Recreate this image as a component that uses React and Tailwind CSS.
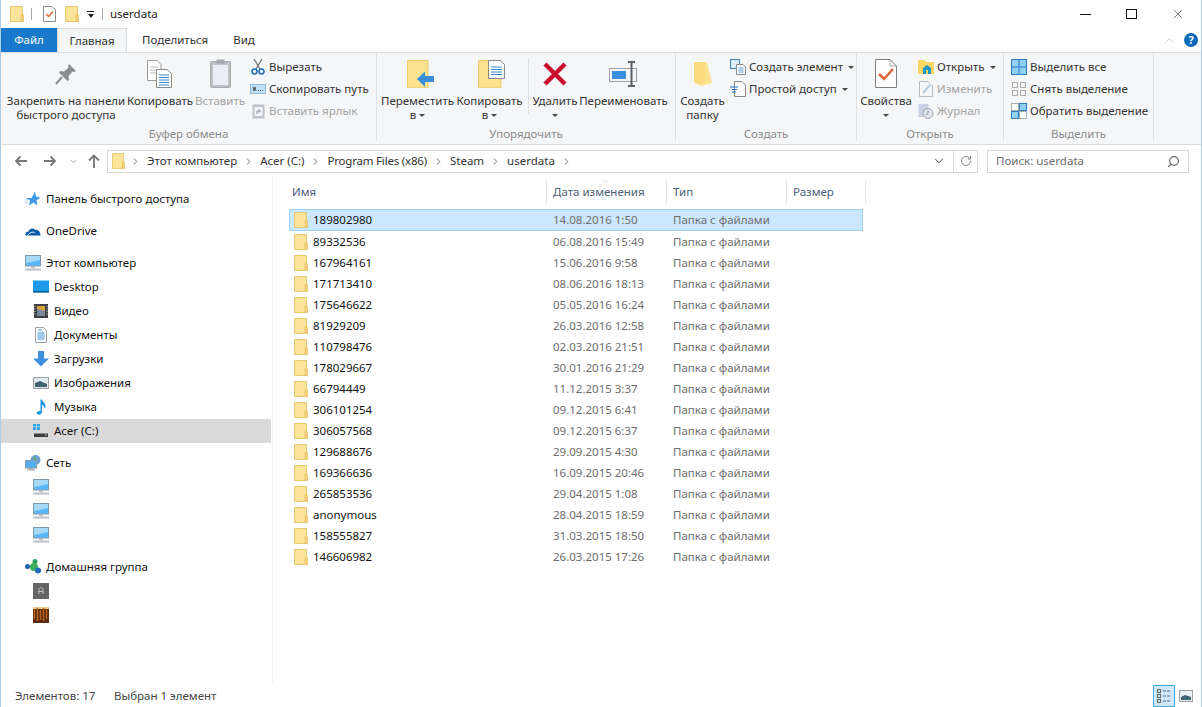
import { ChevronDown, ChevronRight, ChevronUp, RotateCw, Search, X } from 'lucide-react'

const FOLDERS = [
  ['189802980', '14.08.2016 1:50'],
  ['89332536', '06.08.2016 15:49'],
  ['167964161', '15.06.2016 9:58'],
  ['171713410', '08.06.2016 18:13'],
  ['175646622', '05.05.2016 16:24'],
  ['81929209', '26.03.2016 12:58'],
  ['110798476', '02.03.2016 21:51'],
  ['178029667', '30.01.2016 21:29'],
  ['66794449', '11.12.2015 3:37'],
  ['306101254', '09.12.2015 6:41'],
  ['306057568', '09.12.2015 6:37'],
  ['129688676', '29.09.2015 4:30'],
  ['169366636', '16.09.2015 20:46'],
  ['265853536', '29.04.2015 1:08'],
  ['anonymous', '28.04.2015 18:59'],
  ['158555827', '31.03.2015 18:50'],
  ['146606982', '26.03.2015 17:26'],
]

const Folder = ({ w = 14, h = 16 }) => (
  <svg width={w} height={h} viewBox="0 0 14 16" preserveAspectRatio="none" className="shrink-0">
    <path d="M0.5 0.5H12.5V15.5H0.5Z" fill="#fde49b" stroke="#e8c872" />
    <path d="M11 9V15.5H13.5V9L12 8Z" fill="#f5d27a" stroke="#e3bd5f" strokeWidth="0.7" />
  </svg>
)

const Caret = () => <span className="inline-block w-0 h-0 border-x-[3px] border-x-transparent border-t-[3px] border-t-[#444] align-middle" />

const Monitor = () => (
  <svg width="16" height="16" viewBox="0 0 16 16" className="shrink-0">
    <rect x="0.5" y="0.5" width="15" height="10.5" fill="#5cb8f7" stroke="#7f98ab" />
    <path d="M1 1H15V5L1 8Z" fill="#a5daf9" />
    <rect x="6" y="11" width="4" height="2" fill="#b5bcc2" />
    <rect x="0" y="13.5" width="16" height="2" fill="#b8bec4" />
  </svg>
)

const NavIcon = ({ name }) => {
  if (name === 'star')
    return (
      <svg width="16" height="16" viewBox="0 0 16 16">
        <path d="M10 0.5L11 5.5L15.5 6.5L11.5 9.5L12.5 14.5L8.5 11.5L4 14.5L5 9.5L1 7H6.5Z" fill="#3f9be8" />
        <path d="M0 9H3M0 11.5H2.5" stroke="#a9cdec" />
      </svg>
    )
  if (name === 'cloud')
    return (
      <svg width="16" height="16" viewBox="0 0 16 16">
        <path d="M0.5 12.5C0 10 1.5 8.5 3.5 8.5C4.5 5.5 8 4.5 10 7C12.5 6 15.5 8.5 15.5 12.5Z" fill="#0d5ca8" />
        <path d="M3 12.5C4 10 7 8.5 9.5 9.5" stroke="#fff" fill="none" />
      </svg>
    )
  if (name === 'monitor') return <Monitor />
  if (name === 'desktop')
    return (
      <svg width="16" height="16" viewBox="0 0 16 16">
        <rect x="0" y="1.5" width="16" height="12" fill="#1e9be8" />
        <rect x="0" y="12" width="16" height="1.5" fill="#0f5f96" />
      </svg>
    )
  if (name === 'video')
    return (
      <svg width="16" height="16" viewBox="0 0 16 16">
        <rect x="1" y="1" width="14" height="14" fill="#3c3f44" />
        <rect x="4" y="3" width="8" height="10" fill="#7d86a0" />
        <path d="M4 3H12V8L4 6Z" fill="#d6a33c" />
        <path d="M2 3V13M14 3V13" stroke="#c8c8c8" strokeDasharray="1 1.5" />
      </svg>
    )
  if (name === 'docs')
    return (
      <svg width="16" height="16" viewBox="0 0 16 16">
        <path d="M2.5 0.5H10.5L13.5 3.5V15.5H2.5Z" fill="#fff" stroke="#9aa0a6" />
        <path d="M5 3H9M4.5 6H11.5M4.5 8H11.5M4.5 10H11.5M4.5 12H11.5" stroke="#3b8fd6" />
      </svg>
    )
  if (name === 'down')
    return (
      <svg width="16" height="16" viewBox="0 0 16 16">
        <path d="M5 0H11V7.5H16L8 15.5L0 7.5H5Z" fill="#3d8fdc" />
      </svg>
    )
  if (name === 'image')
    return (
      <svg width="16" height="16" viewBox="0 0 16 16">
        <rect x="0.5" y="2.5" width="15" height="11" fill="#dfe9ee" stroke="#9aa0a6" />
        <path d="M2 8L7 6L14 9V12H2Z" fill="#3f6473" />
      </svg>
    )
  if (name === 'music')
    return (
      <svg width="16" height="16" viewBox="0 0 16 16">
        <path d="M7.5 0.5H9C9.5 3 12.5 4 12.5 7C12.5 8 12 9 11.5 9.5C11.5 7.5 10.5 6.5 9 6V13C9 15 7 16 5.5 15.5C3.5 15 3 13.5 4.5 12.5C5.5 11.8 6.8 11.8 7.5 12.3Z" fill="#1e96ea" />
      </svg>
    )
  if (name === 'drive')
    return (
      <svg width="16" height="16" viewBox="0 0 16 16">
        <path d="M0 1H3V3.5H0ZM3.8 1H7V3.5H3.8ZM0 4.3H3V7H0ZM3.8 4.3H7V7H3.8Z" fill="#2aa3e8" />
        <rect x="1" y="10.5" width="14" height="3.5" fill="#3c3c3c" />
        <rect x="12" y="11.5" width="1.5" height="1" fill="#e6e6e6" />
      </svg>
    )
  if (name === 'net')
    return (
      <svg width="16" height="16" viewBox="0 0 16 16">
        <circle cx="10.5" cy="5" r="5" fill="#6f9fd0" />
        <path d="M8 2L11 3.5L9.5 6Z" fill="#6cae57" />
        <rect x="0.5" y="5.5" width="11" height="7.5" fill="#4fb0f0" stroke="#8a9aa8" />
        <rect x="4" y="13" width="4" height="1.2" fill="#9aa5ae" />
        <rect x="2" y="14.3" width="8" height="1.2" fill="#9aa5ae" />
      </svg>
    )
  if (name === 'home')
    return (
      <svg width="16" height="16" viewBox="0 0 16 16">
        <circle cx="2.5" cy="7.5" r="2.5" fill="#1e5da8" />
        <circle cx="10" cy="2.5" r="2.5" fill="#2f9e57" />
        <circle cx="9" cy="8" r="4" fill="#3bae5c" />
        <circle cx="13" cy="11.5" r="3" fill="#1e6fb8" />
      </svg>
    )
  if (name === 'avatar')
    return (
      <svg width="16" height="16" viewBox="0 0 16 16">
        <rect width="16" height="16" fill="#666" />
        <path d="M6 11V6.5C6 4 10 4 10 6.5V11M6 8.5H10" fill="none" stroke="#c4c4c4" />
      </svg>
    )
  return (
    <svg width="16" height="16" viewBox="0 0 16 16">
      <rect width="16" height="16" fill="#5a2c0e" />
      <rect width="16" height="2" fill="#e8c88a" />
      <path d="M1.5 2V12M4.5 1V14M7.5 3V13M10.5 1V14M13.5 2V12" stroke="#b8661a" strokeWidth="1.4" />
    </svg>
  )
}

const SideItem = ({ icon, label, child, active }) => (
  <div className={`h-6 flex items-center gap-[5px] ${child ? 'pl-[32px]' : 'pl-[24px]'} ${active ? 'bg-[#d9d9d9]' : ''}`}>
    <NavIcon name={icon} />
    {label && <span className="text-[#111] whitespace-nowrap">{label}</span>}
  </div>
)

const LargeBtn = ({ w, label, sub, disabled, caret, children }) => (
  <div className={`flex flex-col items-center shrink-0 ${w} ${disabled ? 'text-[#a3a3a3]' : 'text-[#333]'}`}>
    <div className="h-[41px] flex items-center justify-center">{children}</div>
    <div className="text-center leading-[14px] whitespace-pre">{label}</div>
    {sub && <div className="leading-[14px] flex items-center gap-[3px]">{sub}<Caret /></div>}
    {caret && <div className="h-[14px] flex items-center"><Caret /></div>}
  </div>
)

const SmallBtn = ({ icon, label, disabled, caret }) => (
  <div className={`h-[22px] flex items-center gap-[3px] whitespace-nowrap ${disabled ? 'text-[#a3a3a3]' : 'text-[#333]'}`}>
    <span className="w-4 h-4 flex items-center justify-center shrink-0">{icon}</span>
    <span>{label}</span>
    {caret && <span className="ml-[2px] flex"><Caret /></span>}
  </div>
)

const Group = ({ w, label, children }) => (
  <div className={`${w} shrink-0 flex flex-col h-[88px] border-r border-[#dfe0e2]`}>
    <div className="flex h-[75px]">{children}</div>
    <div className="text-center text-[#8c8c8c] leading-[14px]">{label}</div>
  </div>
)

const Crumb = ({ children }) => (
  <>
    <ChevronRight size={11} strokeWidth={2} className="text-[#666] shrink-0" />
    {children && <span className="text-[#333] whitespace-nowrap">{children}</span>}
  </>
)

const HeaderCell = ({ w, label }) => (
  <div className={`${w} h-6 shrink-0 border-r border-[#e5e5e5] pl-[6px] flex items-center text-[#4c607a] whitespace-nowrap`}>{label}</div>
)

export default function App() {
  return (
    <div className="w-[1202px] h-[707px] overflow-hidden bg-white border-x border-[#a9cce9] flex flex-col text-[11.5px] font-['Noto_Sans',sans-serif]">
      {/* title bar */}
      <div className="h-7 flex items-center shrink-0">
        <div className="ml-[9px]"><Folder /></div>
        <div className="w-px h-3 bg-[#aaa] ml-[7px]" />
        <svg width="13" height="16" viewBox="0 0 13 16" className="ml-[11px]">
          <path d="M0.5 0.5H9L12.5 4V15.5H0.5Z" fill="#fff" stroke="#8a8a8a" />
          <path d="M3 8L5.5 10.5L10 5.5" fill="none" stroke="#e2673a" strokeWidth="1.5" />
        </svg>
        <div className="ml-[9px]"><Folder /></div>
        <div className="ml-[8px] flex flex-col items-center gap-[2px]">
          <div className="w-[7px] h-px bg-[#222]" />
          <div className="w-0 h-0 border-x-[3.5px] border-x-transparent border-t-[4px] border-t-[#222]" />
        </div>
        <div className="w-px h-3 bg-[#aaa] ml-[8px]" />
        <span className="ml-[7px] text-[#222]">userdata</span>
        <div className="ml-auto flex items-center">
          <div className="w-[11px] h-px bg-[#111] mr-[35px]" />
          <div className="w-[11px] h-[10px] border border-[#111] mr-[34px]" />
          <X size={14} strokeWidth={1} className="text-[#111] mr-[16px]" />
        </div>
      </div>

      {/* tabs */}
      <div className="h-[24px] flex items-stretch shrink-0 relative">
        <div className="w-[56px] bg-[#1979ca] text-white flex items-center justify-center">Файл</div>
        <div className="w-[70px] h-[24px] bg-[#f5f6f7] border-x border-t border-[#dadbdc] text-[#333] flex items-center justify-center relative z-10">Главная</div>
        <div className="ml-[15px] flex items-center text-[#333]">Поделиться</div>
        <div className="ml-[25px] flex items-center text-[#333]">Вид</div>
        <div className="ml-auto flex items-center mr-[3px] gap-[7px]">
          <ChevronUp size={15} strokeWidth={1} className="text-[#aaa]" />
          <div className="w-[14px] h-[14px] rounded-full bg-[#0e69b8] text-white text-[11px] font-bold flex items-center justify-center">?</div>
        </div>
      </div>

      {/* ribbon */}
      <div className="h-[93px] shrink-0 bg-[#f5f6f7] border-y border-[#dadbdc] flex">
        <Group w="w-[376px]" label="Буфер обмена">
          <div className="flex pl-[2px]">
            <LargeBtn w="w-[126px]" label={'Закрепить на панели\nбыстрого доступа'}>
              <svg width="22" height="22" viewBox="0 0 22 22">
                <path d="M14 1L21 8L19 9L17.5 8.5L13.5 13L14 17L12.5 18L4 9.5L5 8L9 8.5L13.5 4.5L13 3Z" fill="#8b8d90" />
                <path d="M7 14L1 21" stroke="#8b8d90" strokeWidth="2" />
              </svg>
            </LargeBtn>
            <LargeBtn w="w-[62px]" label="Копировать">
              <svg width="26" height="28" viewBox="0 0 26 28">
                <path d="M0.5 0.5H10L14 4.5V20.5H0.5Z" fill="#fff" stroke="#9a9a9a" />
                <path d="M3 7H11M3 10H11M3 13H11" stroke="#bbb" />
                <path d="M9.5 9.5H20L24.5 13.5V27.5H9.5Z" fill="#fff" stroke="#8a8a8a" />
                <path d="M12 15H22M12 17.5H22M12 20H22M12 22.5H22M12 25H22" stroke="#3a87cc" />
              </svg>
            </LargeBtn>
            <LargeBtn w="w-[58px]" label="Вставить" disabled>
              <svg width="21" height="29" viewBox="0 0 21 29">
                <rect x="0.5" y="2.5" width="20" height="26" rx="1" fill="#bcc1c7" stroke="#a6abb0" />
                <rect x="3" y="6" width="15" height="20" fill="#e9edf6" />
                <rect x="6.5" y="0.5" width="8" height="4" fill="#a4a8ad" />
              </svg>
            </LargeBtn>
          </div>
          <div className="flex flex-col pt-[3px] ml-[1px]">
            <SmallBtn label="Вырезать" icon={
              <svg width="14" height="16" viewBox="0 0 14 16">
                <path d="M3 0L9 10M11 0L5 10" stroke="#777" strokeWidth="1.3" />
                <circle cx="3.5" cy="12.5" r="2.5" fill="none" stroke="#1f6fc0" strokeWidth="1.5" />
                <circle cx="10.5" cy="12.5" r="2.5" fill="none" stroke="#1f6fc0" strokeWidth="1.5" />
              </svg>
            } />
            <SmallBtn label="Скопировать путь" icon={
              <svg width="16" height="10" viewBox="0 0 16 10">
                <rect x="0.5" y="0.5" width="15" height="9" fill="#bfe1f7" stroke="#8fb9d8" />
                <path d="M3 3L4 7L5 3L6 7M8 6.5H9M10 6.5H11M12 6.5H13" stroke="#333" strokeWidth="0.8" fill="none" />
              </svg>
            } />
            <SmallBtn label="Вставить ярлык" disabled icon={
              <svg width="13" height="16" viewBox="0 0 13 16">
                <rect x="0.5" y="1.5" width="12" height="14" fill="#bcc1c7" />
                <rect x="2.5" y="4" width="8" height="9" fill="#f2f3f6" />
                <path d="M5 11V8H8M6.5 6.5L8.5 8L6.5 9.5" stroke="#8592a3" fill="none" />
              </svg>
            } />
          </div>
        </Group>

        <Group w="w-[299px]" label="Упорядочить">
          <div className="flex pl-[4px]">
            <LargeBtn w="w-[73px]" label="Переместить" sub="в">
              <svg width="27" height="28" viewBox="0 0 27 28" className="ml-[5px]">
                <path d="M0.5 0.5H21V28H0.5Z" fill="#fce28f" stroke="#ecc96d" />
                <path d="M10 19L18 11.5V16H27V22H18V27Z" fill="#3a8fdc" />
              </svg>
            </LargeBtn>
            <LargeBtn w="w-[71px]" label="Копировать" sub="в">
              <svg width="27" height="28" viewBox="0 0 27 28" className="ml-[3px]">
                <path d="M0.5 0.5H23V28H0.5Z" fill="#fce28f" stroke="#ecc96d" />
                <path d="M10.5 0.5H22L26.5 4.5V18.5H10.5Z" fill="#fff" stroke="#8a8a8a" />
                <path d="M13 7H24M13 9.5H24M13 12H24M13 14.5H24" stroke="#3a87cc" />
              </svg>
            </LargeBtn>
            <div className="w-px h-[56px] bg-[#dfe0e2] mt-[5px] ml-[3px] shrink-0" />
            <LargeBtn w="w-[52px]" label="Удалить" caret>
              <svg width="26" height="26" viewBox="0 0 26 26">
                <path d="M3 3L23 23M23 3L3 23" stroke="#c8102e" strokeWidth="4.5" />
              </svg>
            </LargeBtn>
            <LargeBtn w="w-[85px]" label="Переименовать">
              <svg width="29" height="26" viewBox="0 0 29 26">
                <rect x="0.5" y="7.5" width="27" height="13" fill="#f4f6f8" stroke="#9aa0a6" />
                <rect x="3" y="10" width="14" height="8" fill="#3a8fdc" />
                <path d="M19 1H26M22.5 1V25M19 25H26" stroke="#5a5f66" strokeWidth="2" />
              </svg>
            </LargeBtn>
          </div>
        </Group>

        <Group w="w-[181px]" label="Создать">
          <div className="flex pl-[3px]">
            <LargeBtn w="w-[47px]" label={'Создать\nпапку'}>
              <svg width="20" height="26" viewBox="0 0 20 26">
                <path d="M1 1H14L19 22L8 25L1 22Z" fill="#fce28f" />
                <path d="M1 1H12V22H1Z" fill="#fbdc7d" />
              </svg>
            </LargeBtn>
            <div className="flex flex-col pt-[3px] ml-[4px]">
              <SmallBtn caret label="Создать элемент" icon={
                <svg width="16" height="16" viewBox="0 0 16 16">
                  <rect x="0.5" y="0.5" width="9" height="9" fill="#dceefa" stroke="#4a7fa8" />
                  <path d="M6.5 5.5H13L15.5 8V15.5H6.5Z" fill="#fff" stroke="#888" />
                  <path d="M8.5 9H13.5M8.5 11H13.5M8.5 13H13.5" stroke="#5a9bd0" />
                </svg>
              } />
              <SmallBtn caret label="Простой доступ" icon={
                <svg width="16" height="16" viewBox="0 0 16 16">
                  <path d="M4.5 0.5H12L15.5 4V15.5H4.5Z" fill="#fff" stroke="#888" />
                  <path d="M0 6H8M2 8.5H7M2 11H6" stroke="#1f6fc0" />
                </svg>
              } />
            </div>
          </div>
        </Group>

        <Group w="w-[147px]" label="Открыть">
          <div className="flex">
            <LargeBtn w="w-[58px]" label="Свойства" caret>
              <svg width="22" height="29" viewBox="0 0 22 29">
                <path d="M0.5 0.5H15L21.5 7V28.5H0.5Z" fill="#fff" stroke="#7f7f7f" />
                <path d="M15 0.5V7H21.5" fill="none" stroke="#a6a6a6" />
                <path d="M4 15L9 20L18 10" fill="none" stroke="#e2673a" strokeWidth="2.5" />
              </svg>
            </LargeBtn>
            <div className="flex flex-col pt-[3px] ml-[3px]">
              <SmallBtn caret label="Открыть" icon={
                <svg width="16" height="14" viewBox="0 0 16 14">
                  <path d="M0 0H6L8 2H16V14H0Z" fill="#fbd663" />
                  <path d="M5 14V8L9 5L13 8V14H10V10H8V14Z" fill="#1a96c8" />
                </svg>
              } />
              <SmallBtn label="Изменить" disabled icon={
                <svg width="14" height="16" viewBox="0 0 14 16">
                  <path d="M0.5 0.5H9L13.5 5V15.5H0.5Z" fill="#f6f7f9" stroke="#b7bcc2" />
                  <path d="M4 12L11 4" stroke="#b5cfe6" strokeWidth="2" />
                </svg>
              } />
              <SmallBtn label="Журнал" disabled icon={
                <svg width="16" height="16" viewBox="0 0 16 16">
                  <rect x="0.5" y="1" width="10" height="13" fill="#c8d2e2" />
                  <circle cx="10" cy="10.5" r="5" fill="#e2e6ec" stroke="#9aa4b2" />
                  <path d="M10 7.5V10.5L7.5 12" stroke="#8592a3" fill="none" />
                </svg>
              } />
            </div>
          </div>
        </Group>

        <Group w="w-[150px]" label="Выделить">
          <div className="flex flex-col pt-[3px] pl-[7px]">
            <SmallBtn label="Выделить все" icon={
              <svg width="16" height="16" viewBox="0 0 16 16">
                <rect width="16" height="16" fill="#2b7cc4" />
                <path d="M1 1H7.5V7.5H1ZM8.5 1H15V7.5H8.5ZM1 8.5H7.5V15H1ZM8.5 8.5H15V15H8.5Z" fill="#8fd0f5" />
              </svg>
            } />
            <SmallBtn label="Снять выделение" icon={
              <svg width="16" height="16" viewBox="0 0 16 16" fill="none" stroke="#a9a9a9">
                <rect x="1.5" y="1.5" width="5" height="5" />
                <rect x="9.5" y="1.5" width="5" height="5" />
                <rect x="1.5" y="9.5" width="5" height="5" />
                <rect x="9.5" y="9.5" width="5" height="5" />
              </svg>
            } />
            <SmallBtn label="Обратить выделение" icon={
              <svg width="16" height="16" viewBox="0 0 16 16">
                <rect x="0.5" y="8.5" width="7" height="7" fill="#8fd0f5" stroke="#2b7cc4" />
                <rect x="8.5" y="0.5" width="7" height="7" fill="#8fd0f5" stroke="#2b7cc4" />
                <rect x="0.5" y="0.5" width="7" height="7" fill="#fff" stroke="#a9a9a9" />
                <rect x="8.5" y="8.5" width="7" height="7" fill="#fff" stroke="#a9a9a9" />
              </svg>
            } />
          </div>
        </Group>
      </div>

      {/* address bar */}
      <div className="h-[32px] shrink-0 flex items-center">
        <svg width="13" height="12" viewBox="0 0 13 12" className="ml-[13px] shrink-0">
          <path d="M13 6H2M6.5 1.5L2 6L6.5 10.5" fill="none" stroke="#777" strokeWidth="1.8" />
        </svg>
        <svg width="13" height="12" viewBox="0 0 13 12" className="ml-[17px] shrink-0">
          <path d="M0 6H11M6.5 1.5L11 6L6.5 10.5" fill="none" stroke="#777" strokeWidth="1.8" />
        </svg>
        <ChevronDown size={9} strokeWidth={2} className="ml-[12px] text-[#8a8a8a] shrink-0" />
        <svg width="12" height="14" viewBox="0 0 12 14" className="ml-[10px] shrink-0">
          <path d="M6 14V2M1 6.5L6 1.5L11 6.5" fill="none" stroke="#777" strokeWidth="1.8" />
        </svg>
        <div className="ml-[7px] w-[871px] h-[23px] border border-[#d9d9d9] flex items-center shrink-0">
          <div className="ml-[4px] mr-[5px]"><Folder w={13} h={16} /></div>
          <div className="flex items-center gap-[6px]">
            <Crumb>Этот компьютер</Crumb>
            <Crumb>Acer (C:)</Crumb>
            <Crumb><span className="tracking-[-0.2px]">Program Files (x86)</span></Crumb>
            <Crumb>Steam</Crumb>
            <Crumb>userdata</Crumb>
            <Crumb />
          </div>
          <ChevronDown size={14} strokeWidth={1.8} className="ml-auto mr-[7px] text-[#666]" />
          <div className="w-[24px] h-full border-l border-[#d9d9d9] flex items-center justify-center">
            <RotateCw size={12} strokeWidth={1.8} className="text-[#777]" />
          </div>
        </div>
        <div className="ml-[9px] w-[202px] h-[23px] border border-[#d9d9d9] flex items-center pl-2 pr-[8px] text-[#6d6d6d] shrink-0">
          <span>Поиск: userdata</span>
          <Search size={13} strokeWidth={2.2} className="ml-auto -scale-x-100 text-[#666]" />
        </div>
      </div>

      {/* body */}
      <div className="flex-1 min-h-0 flex">
        <div className="w-[272px] shrink-0 pt-[10px] border-r border-[#f0f0f0]">
          <div className="w-[270px]">
            <SideItem icon="star" label="Панель быстрого доступа" />
            <div className="mt-2"><SideItem icon="cloud" label="OneDrive" /></div>
            <div className="mt-2">
              <SideItem icon="monitor" label="Этот компьютер" />
              <SideItem child icon="desktop" label="Desktop" />
              <SideItem child icon="video" label="Видео" />
              <SideItem child icon="docs" label="Документы" />
              <SideItem child icon="down" label="Загрузки" />
              <SideItem child icon="image" label="Изображения" />
              <SideItem child icon="music" label="Музыка" />
              <SideItem child icon="drive" label="Acer (C:)" active />
            </div>
            <div className="mt-2">
              <SideItem icon="net" label="Сеть" />
              <SideItem child icon="monitor" />
              <SideItem child icon="monitor" />
              <SideItem child icon="monitor" />
            </div>
            <div className="mt-2">
              <SideItem icon="home" label="Домашняя группа" />
              <SideItem child icon="avatar" />
              <SideItem child icon="photo" />
            </div>
          </div>
        </div>

        <div className="flex-1 min-w-0 flex flex-col">
          <div className="pl-[13px] pt-[3px] flex items-start">
            <HeaderCell w="w-[261px]" label="Имя" />
            <div className="relative">
              <HeaderCell w="w-[120px]" label="Дата изменения" />
              <ChevronDown size={9} strokeWidth={1} className="absolute left-[54px] -top-[3px] text-[#888]" />
            </div>
            <HeaderCell w="w-[120px]" label="Тип" />
            <HeaderCell w="w-[79px]" label="Размер" />
          </div>
          <div className="pl-[16px] pt-[5px] w-[591px]">
            {FOLDERS.map(([name, date], i) => (
              <div
                key={name}
                className={`flex items-center w-[574px] border ${i === 0 ? 'h-[22px] bg-[#cce8ff] border-[#99d1ff]' : 'h-[21px] border-transparent'}`}
              >
                <div className="ml-[4px] mr-[5px]"><Folder /></div>
                <span className="w-[240px] shrink-0 text-[#111]">{name}</span>
                <span className="w-[120px] shrink-0 text-[#6d6d6d]">{date}</span>
                <span className="text-[#6d6d6d]">Папка с файлами</span>
              </div>
            ))}
          </div>
        </div>
      </div>

      {/* status bar */}
      <div className="h-6 shrink-0 flex items-center text-[#444] pt-[1px]">
        <span className="ml-[14px] w-[99px]">Элементов: 17</span>
        <span>Выбран 1 элемент</span>
        <div className="ml-auto flex items-center mr-[8px] gap-[4px]">
          <div className="w-[22px] h-[22px] bg-[#cce8ff] border border-[#52a8e0] flex items-center justify-center">
            <svg width="14" height="14" viewBox="0 0 14 14" fill="none" stroke="#666">
              <rect x="0.5" y="0.5" width="3" height="3" />
              <rect x="0.5" y="5.5" width="3" height="3" />
              <rect x="0.5" y="10.5" width="3" height="3" />
              <path d="M6 2H9M10 2H13M6 7H9M10 7H13M6 12H9M10 12H13" />
            </svg>
          </div>
          <svg width="14" height="12" viewBox="0 0 14 12">
            <rect x="0.5" y="0.5" width="13" height="11" fill="#e8eef2" stroke="#9aa0a6" />
            <path d="M2 7L6 5L12 7V10H2Z" fill="#3f6473" />
          </svg>
        </div>
      </div>
    </div>
  )
}
